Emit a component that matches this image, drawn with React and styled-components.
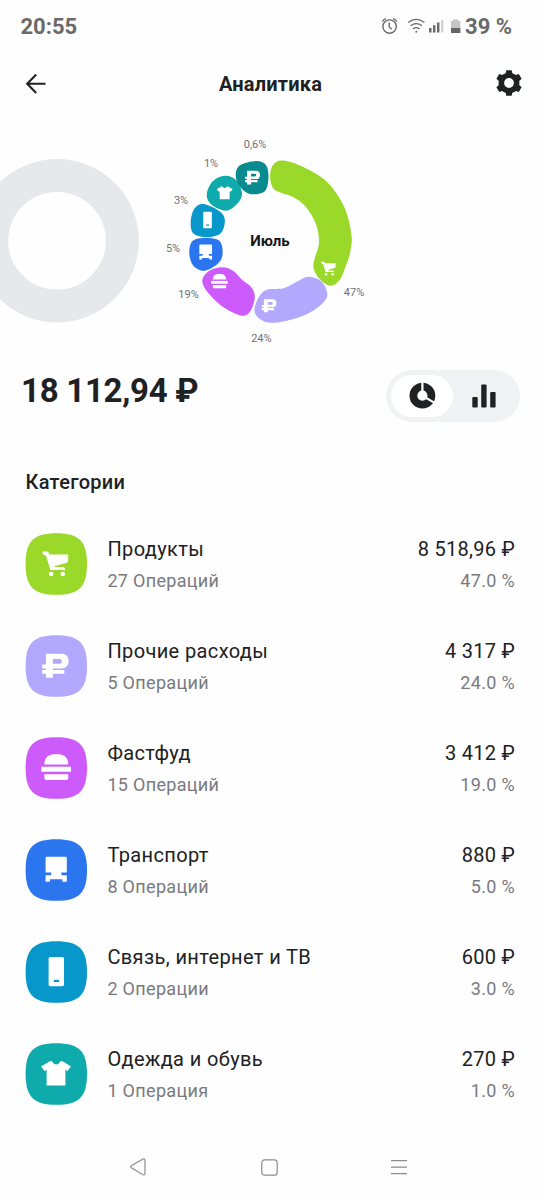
import React from 'react';
import styled, { createGlobalStyle } from 'styled-components';

const GlobalStyle = createGlobalStyle`
  * { box-sizing: border-box; }
  body { margin: 0; background: #fefefe; font-family: Roboto, "Noto Sans", sans-serif; color: #202123; }
  svg { display: block; }
`;

const Screen = styled.main`
  width: 540px;
  height: 1200px;
  display: flex;
  flex-direction: column;
  overflow: hidden;
  background: #fefefe;
`;

const StatusBar = styled.div`
  height: 52px;
  padding: 1px 28px 0 20.5px;
  display: flex;
  align-items: center;
  justify-content: space-between;
  font-size: 22px;
  font-weight: 700;
  color: #6a6a6a;
`;

const StatusIcons = styled.div`
  display: flex;
  align-items: center;
  gap: 4px;
`;

const Header = styled.header`
  height: 64px;
  padding: 0 17px 2px 22px;
  display: grid;
  grid-template-columns: 28px 1fr 28px;
  align-items: center;
  justify-items: center;
`;

const Title = styled.h1`
  margin: 2px 0 0 -4px;
  font-size: 20px;
  line-height: 24px;
  font-weight: 700;
  letter-spacing: 0.2px;
`;

const Chart = styled.svg`
  width: 540px;
  height: 238px;
  flex: none;
`;

const Summary = styled.section`
  height: 82px;
  padding: 16px 20px 0 21px;
  display: flex;
  justify-content: space-between;
  align-items: flex-start;
`;

const Amount = styled.div`
  margin-top: 1px;
  font-size: 33px;
  line-height: 40px;
  font-weight: 700;
  letter-spacing: -0.28px;
`;

const Toggle = styled.div`
  width: 134px;
  height: 52px;
  padding: 5px;
  display: flex;
  border-radius: 26px;
  background: #f1f2f4;
`;

const ToggleOption = styled.button`
  width: 62px;
  height: 42px;
  padding: 0;
  border: 0;
  border-radius: 21px;
  display: flex;
  align-items: center;
  justify-content: center;
  background: ${(p) => (p.$active ? '#fff' : 'transparent')};
`;

const SectionTitle = styled.h2`
  margin: 32px 0 0 25.5px;
  height: 28px;
  font-size: 20px;
  line-height: 28px;
  font-weight: 500;
  letter-spacing: 0.3px;
`;

const List = styled.div`
  display: flex;
  flex-direction: column;
  padding-top: 17px;
`;

const Row = styled.div`
  height: 102px;
  flex: none;
  padding: 0 25px;
  display: flex;
  align-items: center;
`;

const Tile = styled.svg`
  width: 62px;
  height: 62px;
  flex: none;
`;

const Info = styled.div`
  flex: ${(p) => (p.$end ? 'none' : '1')};
  margin-left: 20.4px;
  display: flex;
  flex-direction: column;
  align-items: ${(p) => (p.$end ? 'flex-end' : 'flex-start')};
  white-space: nowrap;
`;

const Primary = styled.div`
  font-size: 20px;
  line-height: 32px;
  letter-spacing: ${(p) => (p.$numeric ? '0.28px' : '0.38px')};
`;

const Secondary = styled.div`
  font-size: 18px;
  line-height: 30px;
  padding-top: 1px;
  margin-bottom: -1px;
  letter-spacing: 0.32px;
  color: #797a80;
`;

const NavBar = styled.nav`
  margin-top: auto;
  height: 66px;
  padding: 0 133px 0 130px;
  display: grid;
  grid-template-columns: 16px 1fr 16px;
  align-items: center;
  justify-items: center;
`;

const glyphs = {
  cart: (
    <>
      <path d="M16.6 18.6H21.4Q22.8 18.6 23.2 20L23.6 21.4H42.6V27.2Q42.6 29.3 40.6 29.9L28.4 33.3Q29 34 30 34H37.6Q39.6 34.6 39.8 37H24.8L20.4 22.8L17.6 21.6Z" />
      <circle cx="25.6" cy="41" r="2.3" />
      <circle cx="37.2" cy="41" r="2.3" />
    </>
  ),
  ruble: (
    <path
      fillRule="evenodd"
      d="M20.3 18.7H36Q43 19 43 26Q43 33.2 36 33.4H27.3V35H38.7V38.8H27.3V42.7H20.3V38.8H16.6V35H20.3V33.4H16.6V29.4H20.3ZM27.3 24V28.8H34Q36.4 28.6 36.4 26.4Q36.4 24.1 34 24Z"
    />
  ),
  burger: (
    <>
      <path d="M18.7 27.4C18.7 21 23 17.3 28 17.3H33.4C38.4 17.3 42.7 21 42.7 27.4Z" />
      <rect x="15.8" y="29.7" width="29.6" height="5" />
      <path d="M18.7 37.2H42.7V40.8Q42.7 43 40.5 43H20.9Q18.7 43 18.7 40.8Z" />
    </>
  ),
  bus: (
    <path d="M20 19Q20 17.7 21.3 17.7H40Q41.2 17.7 41.2 19V33.6H35.8V36.2H41.2V42.7H36.8V40.3H24.4V42.7H20V36.2H25.6V33.6H20Z" />
  ),
  phone: (
    <path
      fillRule="evenodd"
      d="M24.6 16H36.8Q38.4 16 38.4 17.6V43.6Q38.4 45.3 36.8 45.3H24.6Q23 45.3 23 43.6V17.6Q23 16 24.6 16ZM28.2 38.8V41H33.4V38.8Z"
    />
  ),
  shirt: (
    <path d="M24.2 18.2H26.6Q28 21.4 30.6 21.4Q33.2 21.4 34.6 18.2H37L45.4 23.4L41.6 28.2L39.8 26.6V42.4H21V26.6L19.2 28.2L15.4 23.4Z" />
  ),
};

const segments = [
  {
    color: '#9ad829', icon: 'cart', at: [328.7, 268.5], scale: 0.56, label: '47%', labelAt: [354, 295.5],
    points: [[270, 176], [273, 165], [282, 160.4], [300, 165.5], [326, 181], [344, 206.5], [351.5, 235], [350, 253], [345, 268], [340, 279.5], [331, 285.7], [320, 279.5], [313.5, 268], [315, 257.5], [319, 243], [316, 224], [305, 206], [293, 197], [281, 192.8], [273, 188]],
  },
  {
    color: '#b2a8fe', icon: 'ruble', at: [269.4, 305.7], scale: 0.55, label: '24%', labelAt: [261.4, 342],
    points: [[308.3, 276.7], [321, 281], [327.3, 293.3], [322.7, 303.3], [306.7, 314.3], [286.7, 320.7], [266.7, 322.3], [255, 313.3], [257.3, 300], [266, 290], [283.3, 288.3], [296.7, 281.7]],
  },
  {
    color: '#cd5afb', icon: 'burger', at: [219.3, 281.4], scale: 0.56, label: '19%', labelAt: [188.5, 297.5],
    points: [[221.7, 267.3], [233.3, 271], [241.7, 279.5], [251.2, 287], [254.8, 297], [250.5, 311], [241.7, 315.7], [225, 308.3], [210, 295], [202.3, 281.7], [208, 271.7]],
  },
  {
    color: '#2b76ef', icon: 'bus', at: [205.5, 252.3], scale: 0.6, label: '5%', labelAt: [173, 252],
    points: [[189.3, 253.3], [192.5, 241], [205, 238], [219, 240.5], [222.7, 252], [219, 262.5], [205, 270.7], [193.5, 266]],
  },
  {
    color: '#0897cb', icon: 'phone', at: [207.3, 220], scale: 0.56, label: '3%', labelAt: [181, 204],
    points: [[190.7, 221.7], [194.5, 208.5], [204, 204], [221, 212.4], [224.8, 222], [220.3, 233.5], [207, 237.2], [193.5, 233.5]],
  },
  {
    color: '#0eaaac', icon: 'shirt', at: [224.6, 193], scale: 0.53, label: '1%', labelAt: [211, 166.5],
    points: [[206.7, 195], [212.5, 181.5], [225, 175.7], [236.5, 180.5], [241.7, 196.5], [228.3, 210.3], [212.5, 205.5]],
  },
  {
    color: '#098a8e', icon: 'ruble', at: [252.8, 177.5], scale: 0.57, label: '0,6%', labelAt: [255, 147.5],
    points: [[235.7, 175], [240, 165.3], [256.7, 160.9], [266.3, 165.5], [268.4, 179], [264.5, 191.5], [250, 194], [239.5, 186]],
  },
];

function smoothPath(pts) {
  const n = pts.length;
  let d = `M${pts[0][0]} ${pts[0][1]}`;
  for (let i = 0; i < n; i += 1) {
    const a = pts[(i - 1 + n) % n];
    const b = pts[i];
    const c = pts[(i + 1) % n];
    const e = pts[(i + 2) % n];
    d += `C${b[0] + (c[0] - a[0]) / 6} ${b[1] + (c[1] - a[1]) / 6} ${c[0] - (e[0] - b[0]) / 6} ${c[1] - (e[1] - b[1]) / 6} ${c[0]} ${c[1]}`;
  }
  return `${d}Z`;
}

const categories = [
  { icon: 'cart', color: '#9ad829', name: 'Продукты', count: '27 Операций', sum: '8 518,96 ₽', share: '47.0 %' },
  { icon: 'ruble', color: '#b2a8fe', name: 'Прочие расходы', count: '5 Операций', sum: '4 317 ₽', share: '24.0 %' },
  { icon: 'burger', color: '#cd5afb', name: 'Фастфуд', count: '15 Операций', sum: '3 412 ₽', share: '19.0 %' },
  { icon: 'bus', color: '#2b76ef', name: 'Транспорт', count: '8 Операций', sum: '880 ₽', share: '5.0 %' },
  { icon: 'phone', color: '#0897cb', name: 'Связь, интернет и ТВ', count: '2 Операции', sum: '600 ₽', share: '3.0 %' },
  { icon: 'shirt', color: '#0eaaac', name: 'Одежда и обувь', count: '1 Операция', sum: '270 ₽', share: '1.0 %' },
];

function SpendingChart() {
  return (
    <Chart viewBox="0 116 540 238">
      <circle cx="57" cy="240.7" r="65.3" fill="none" stroke="#e6e8ec" strokeWidth="33" />
      {segments.map((s) => (
        <g key={s.label}>
          <path d={smoothPath(s.points)} fill={s.color} />
          <g fill="#fff" transform={`translate(${s.at[0]} ${s.at[1]}) scale(${s.scale}) translate(-30.3 -30.6)`}>
            {glyphs[s.icon]}
          </g>
          <text x={s.labelAt[0]} y={s.labelAt[1]} fontSize="11" fill="#6f7076" textAnchor="middle">{s.label}</text>
        </g>
      ))}
      <text x="270" y="246" fontSize="15" fontWeight="700" fill="#151619" textAnchor="middle">Июль</text>
    </Chart>
  );
}

function StatusGlyphs() {
  return (
    <svg width="84" height="24" viewBox="377 14 84 24" fill="none" stroke="#6a6a6a" strokeWidth="1.4">
      <circle cx="389.6" cy="25.6" r="6.7" />
      <path d="M389.3 21.5V26L391.8 28.2M382.4 20.6Q383.2 18.2 386 17.6M393.2 17.6Q396 18.2 396.8 20.6" />
      <path d="M408.2 21.5Q416.3 15.2 424.4 21.5M410.6 24.8Q416.3 20.4 422 24.8M413 28Q416.3 25.4 419.6 28" strokeWidth="1.3" />
      <circle cx="416.3" cy="30.8" r="1" fill="#6a6a6a" stroke="none" />
      <path d="M430.3 31.5V27M434.2 31.5V24.3M438.2 31.5V21.4" strokeWidth="2.5" />
      <path d="M442.2 31.5V19" strokeWidth="2.2" stroke="#d0d0d0" />
      <path d="M451 20H453V18.5H458.3V20H460.4V27H451Z" fill="#c5c5c5" stroke="none" />
      <path d="M451 27H460.4V32H451Z" fill="#666" stroke="none" />
    </svg>
  );
}

export default function App() {
  return (
    <Screen>
      <GlobalStyle />
      <StatusBar>
        <span>20:55</span>
        <StatusIcons>
          <StatusGlyphs />
          <span>39 %</span>
        </StatusIcons>
      </StatusBar>
      <Header>
        <svg width="24" height="24" viewBox="0 0 24 24" fill="none" stroke="#202123" strokeWidth="2.1">
          <path d="M21.5 12.7H3.6M12.2 3.4L3.2 12.7L12.2 22" />
        </svg>
        <Title>Аналитика</Title>
        <svg width="28" height="28" viewBox="-14 -14 28 28" fill="#202123">
          <path
            fillRule="evenodd"
            d="M-2.7 -12.8H2.7L3.3 -9.8Q5.2 -9.2 6.8 -7.9L9.8 -9L12.6 -4.2L10.2 -2Q10.6 0 10.2 2L12.6 4.2L9.8 9L6.8 7.9Q5.2 9.2 3.3 9.8L2.7 12.8H-2.7L-3.3 9.8Q-5.2 9.2 -6.8 7.9L-9.8 9L-12.6 4.2L-10.2 2Q-10.6 0 -10.2 -2L-12.6 -4.2L-9.8 -9L-6.8 -7.9Q-5.2 -9.2 -3.3 -9.8ZM0 -4.9A4.9 4.9 0 1 0 0 4.9A4.9 4.9 0 1 0 0 -4.9Z"
          />
        </svg>
      </Header>
      <SpendingChart />
      <Summary>
        <Amount>18 112,94 ₽</Amount>
        <Toggle>
          <ToggleOption $active>
            <svg width="28" height="28" viewBox="-14.4 -13.7 28 28">
              <circle r="9" fill="none" stroke="#202123" strokeWidth="7.8" />
              <path d="M0 0V-14M0 0L12.6 7.4" stroke="#fff" strokeWidth="2.2" />
            </svg>
          </ToggleOption>
          <ToggleOption>
            <svg width="26" height="26" viewBox="0 0 26 26" fill="#202123">
              <rect x="1.3" y="14" width="5.4" height="10.6" rx="1" />
              <rect x="10.2" y="1.4" width="5.4" height="23.2" rx="1" />
              <rect x="19.2" y="9" width="5.4" height="15.6" rx="1" />
            </svg>
          </ToggleOption>
        </Toggle>
      </Summary>
      <SectionTitle>Категории</SectionTitle>
      <List>
        {categories.map((c) => (
          <Row key={c.name}>
            <Tile viewBox="0 0 62 62">
              <path d="M31.3 0.2C54 0.2 62 8.2 62 31S54 61.8 31.3 61.8S0.6 53.8 0.6 31S8.6 0.2 31.3 0.2Z" fill={c.color} />
              <g fill="#fff" transform="translate(0.6 0)">{glyphs[c.icon]}</g>
            </Tile>
            <Info>
              <Primary>{c.name}</Primary>
              <Secondary>{c.count}</Secondary>
            </Info>
            <Info $end>
              <Primary $numeric>{c.sum}</Primary>
              <Secondary>{c.share}</Secondary>
            </Info>
          </Row>
        ))}
      </List>
      <NavBar>
        <svg width="16" height="18" viewBox="0 0 16 18" fill="none" stroke="#8c8c8c" strokeWidth="1.2">
          <path d="M1.3 7.8L12.5 1.2Q15 0.2 15 2.5V15.3Q15 17.5 12.5 16.5L1.3 9.8Q0 8.8 1.3 7.8Z" />
        </svg>
        <svg width="19" height="17" viewBox="-2 0 19 17" fill="none" stroke="#8c8c8c" strokeWidth="1.2">
          <rect x="0.8" y="0.8" width="15.4" height="15.4" rx="2.8" />
        </svg>
        <svg width="16" height="16" viewBox="0 0 16 16" stroke="#8c8c8c" strokeWidth="1.3">
          <path d="M0 1.7H16M0 8.2H16M0 14.7H16" />
        </svg>
      </NavBar>
    </Screen>
  );
}
